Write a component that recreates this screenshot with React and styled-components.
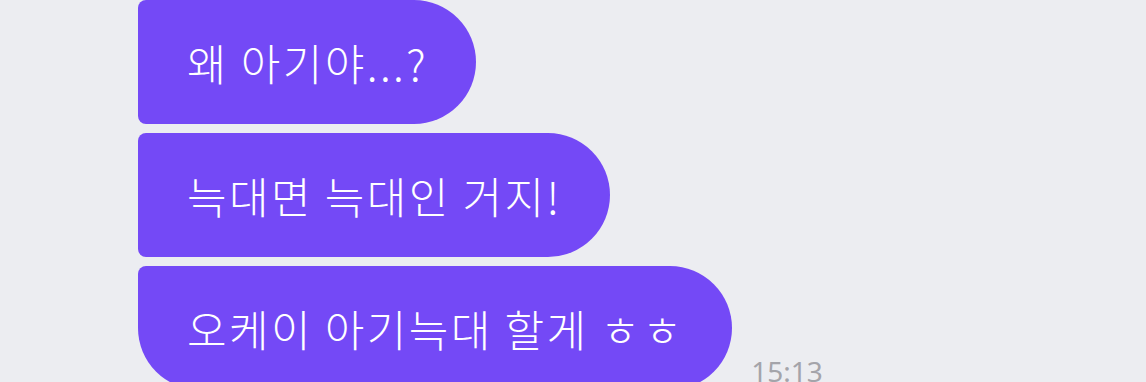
import React from "react";
import styled, { createGlobalStyle } from "styled-components";

const GlobalStyle = createGlobalStyle`
  html, body {
    margin: 0;
    padding: 0;
    background: #ecedf1;
    overflow: hidden;
  }
  body {
    font-family: "Noto Sans CJK KR", "Noto Sans", sans-serif;
  }
`;

const Thread = styled.div`
  display: flex;
  flex-direction: column;
  align-items: flex-start;
  gap: 9px;
  padding: 0 0 0 138px;
`;

const Row = styled.div`
  display: flex;
  align-items: flex-end;
  gap: 19px;
`;

const Bubble = styled.div`
  background: #7449f6;
  color: #ffffff;
  font-size: 43px;
  font-weight: 300;
  letter-spacing: 2.4px;
  line-height: 50px;
  padding: 37px 48px 37px 49px;
  white-space: nowrap;
  border-radius: 8px 62px 62px ${({ $last }) => ($last ? "62px" : "8px")};
`;

const Time = styled.span`
  color: #a4a4aa;
  font-size: 28px;
  line-height: 28px;
  margin-bottom: 5px;
  font-family: "Noto Sans", "Noto Sans CJK KR", sans-serif;
`;

const messages = ["왜 아기야...?", "늑대면 늑대인 거지!", "오케이 아기늑대 할게 ㅎㅎ"];

export default function App() {
  return (
    <>
      <GlobalStyle />
      <Thread>
        {messages.map((text, i) => {
          const last = i === messages.length - 1;
          return (
            <Row key={i}>
              <Bubble $last={last}>{text}</Bubble>
              {last && <Time>15:13</Time>}
            </Row>
          );
        })}
      </Thread>
    </>
  );
}
